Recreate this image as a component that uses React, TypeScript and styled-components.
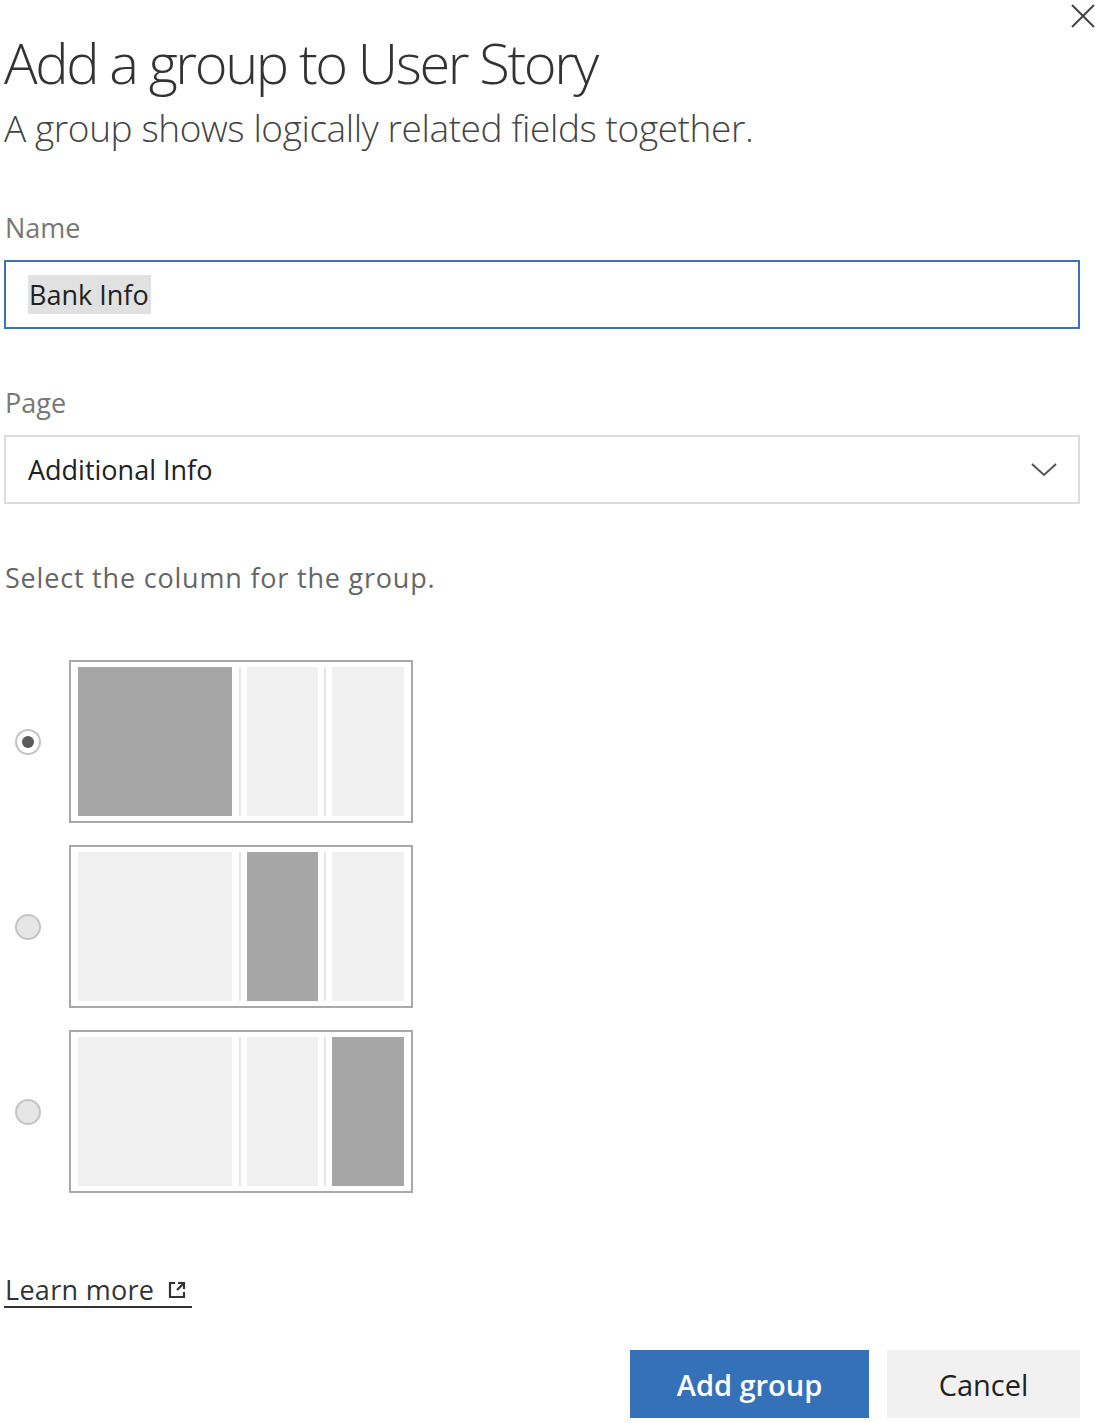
import React, { useState } from "react";
import styled, { createGlobalStyle } from "styled-components";

const Global = createGlobalStyle`
  html, body { margin: 0; padding: 0; background: #fff; }
  body { font-family: "Open Sans", "Noto Sans", sans-serif; color: #333; }
  * { box-sizing: border-box; }
`;

const Dialog = styled.div`
  position: relative;
  width: 1100px;
  height: 1423px;
  padding: 24px 20px 0 4px;
  display: flex;
  flex-direction: column;
`;

const CloseButton = styled.button`
  position: absolute;
  top: 3px;
  right: 4px;
  width: 26px;
  height: 26px;
  padding: 0;
  border: none;
  background: transparent;
  display: flex;
  align-items: center;
  justify-content: center;
`;

const Title = styled.h1`
  margin: 0;
  font-family: "Open Sans", sans-serif;
  font-weight: 300;
  font-size: 56px;
  line-height: 76px;
  color: #333;
  letter-spacing: -2.4px;
`;

const Subtitle = styled.p`
  margin: 0;
  font-family: "Open Sans", sans-serif;
  font-weight: 300;
  font-size: 37px;
  line-height: 56px;
  color: #444;
  letter-spacing: -0.4px;
`;

const Label = styled.label<{ $top: number }>`
  display: block;
  margin-top: ${(p) => p.$top}px;
  font-size: 27px;
  line-height: 36px;
  color: #777;
  padding-left: 1px;
`;

const Field = styled.div<{ $focused?: boolean }>`
  margin-top: 14px;
  height: 69px;
  border: ${(p) => (p.$focused ? "2px solid #3a73b8" : "2px solid #dcdcdc")};
  display: flex;
  align-items: center;
  justify-content: space-between;
  padding: 0 20px 0 22px;
  font-size: 27px;
  color: #222;
`;

const Selected = styled.span`
  background: #e1e1e1;
  padding: 1px 2px 1px 1px;
`;

const Hint = styled.p`
  margin: 56px 0 0;
  font-size: 27px;
  line-height: 36px;
  color: #666;
  padding-left: 1px;
  letter-spacing: 0.8px;
`;

const Options = styled.div`
  margin-top: 64px;
  display: flex;
  flex-direction: column;
  gap: 22px;
`;

const Option = styled.div`
  display: flex;
  align-items: center;
  gap: 28px;
  padding-left: 11px;
  cursor: pointer;
`;

const Radio = styled.span<{ $checked: boolean }>`
  width: 26px;
  height: 26px;
  border-radius: 50%;
  border: 2px solid #c4c4c4;
  background: ${(p) => (p.$checked ? "#fff" : "#e6e6e6")};
  display: flex;
  align-items: center;
  justify-content: center;
  &::after {
    content: "";
    width: 12px;
    height: 12px;
    border-radius: 50%;
    background: ${(p) => (p.$checked ? "#5a5a5a" : "transparent")};
  }
`;

const Layout = styled.div`
  width: 344px;
  height: 163px;
  border: 2px solid #a8a8a8;
  padding: 5px 7px;
  display: grid;
  grid-template-columns: 161px 85px 80px;
  background: #fff;
`;

const colPad = ["0 7px 0 0", "0 6px", "0 0 0 6px"];

const Col = styled.div<{ $active: boolean; $pos: number }>`
  padding: ${(p) => colPad[p.$pos]};
  border-left: ${(p) => (p.$pos === 0 ? "none" : "2px solid #e6e6e6")};
  &::before {
    content: "";
    display: block;
    height: 100%;
    background: ${(p) => (p.$active ? "#a6a6a6" : "#f0f0f0")};
  }
`;

const LearnMore = styled.a`
  margin-top: 81px;
  align-self: flex-start;
  display: inline-flex;
  align-items: center;
  gap: 13px;
  font-size: 27px;
  line-height: 32px;
  color: #333;
  text-decoration: none;
  border-bottom: 2px solid #333;
  padding: 0 5px 0 1px;
  letter-spacing: 0.3px;
`;

const Footer = styled.div`
  margin-top: 42px;
  display: flex;
  justify-content: flex-end;
  gap: 18px;
`;

const Button = styled.button<{ $primary?: boolean }>`
  height: 68px;
  border: none;
  font-family: "Open Sans", sans-serif;
  font-size: 29px;
  font-weight: ${(p) => (p.$primary ? 600 : 400)};
  background: ${(p) => (p.$primary ? "#3571b8" : "#f1f1f1")};
  color: ${(p) => (p.$primary ? "#fff" : "#222")};
  width: ${(p) => (p.$primary ? 239 : 193)}px;
`;

export default function App() {
  const [col, setCol] = useState(0);
  return (
    <>
      <Global />
      <Dialog>
        <CloseButton aria-label="Close">
          <svg width="24" height="24" viewBox="0 0 24 24">
            <path d="M1 1 L23 23 M23 1 L1 23" stroke="#444" strokeWidth="2" fill="none" />
          </svg>
        </CloseButton>
        <Title>Add a group to User Story</Title>
        <Subtitle>A group shows logically related fields together.</Subtitle>
        <Label $top={54}>Name</Label>
        <Field $focused>
          <Selected>Bank Info</Selected>
        </Field>
        <Label $top={56}>Page</Label>
        <Field>
          <span>Additional Info</span>
          <svg width="28" height="16" viewBox="0 0 28 16">
            <path d="M2 2 L14 13 L26 2" stroke="#555" strokeWidth="2" fill="none" />
          </svg>
        </Field>
        <Hint>Select the column for the group.</Hint>
        <Options>
          {[0, 1, 2].map((i) => (
            <Option key={i} onClick={() => setCol(i)}>
              <Radio $checked={col === i} />
              <Layout>
                {[0, 1, 2].map((c) => (
                  <Col key={c} $pos={c} $active={c === i} />
                ))}
              </Layout>
            </Option>
          ))}
        </Options>
        <LearnMore href="#">
          Learn more
          <svg width="20" height="20" viewBox="0 0 20 20">
            <path d="M8 3 H3 V17 H17 V12" stroke="#333" strokeWidth="2.2" fill="none" />
            <path d="M10 10 L17 3 M11 3 H17 V9" stroke="#333" strokeWidth="2.2" fill="none" />
          </svg>
        </LearnMore>
        <Footer>
          <Button $primary>Add group</Button>
          <Button>Cancel</Button>
        </Footer>
      </Dialog>
    </>
  );
}
